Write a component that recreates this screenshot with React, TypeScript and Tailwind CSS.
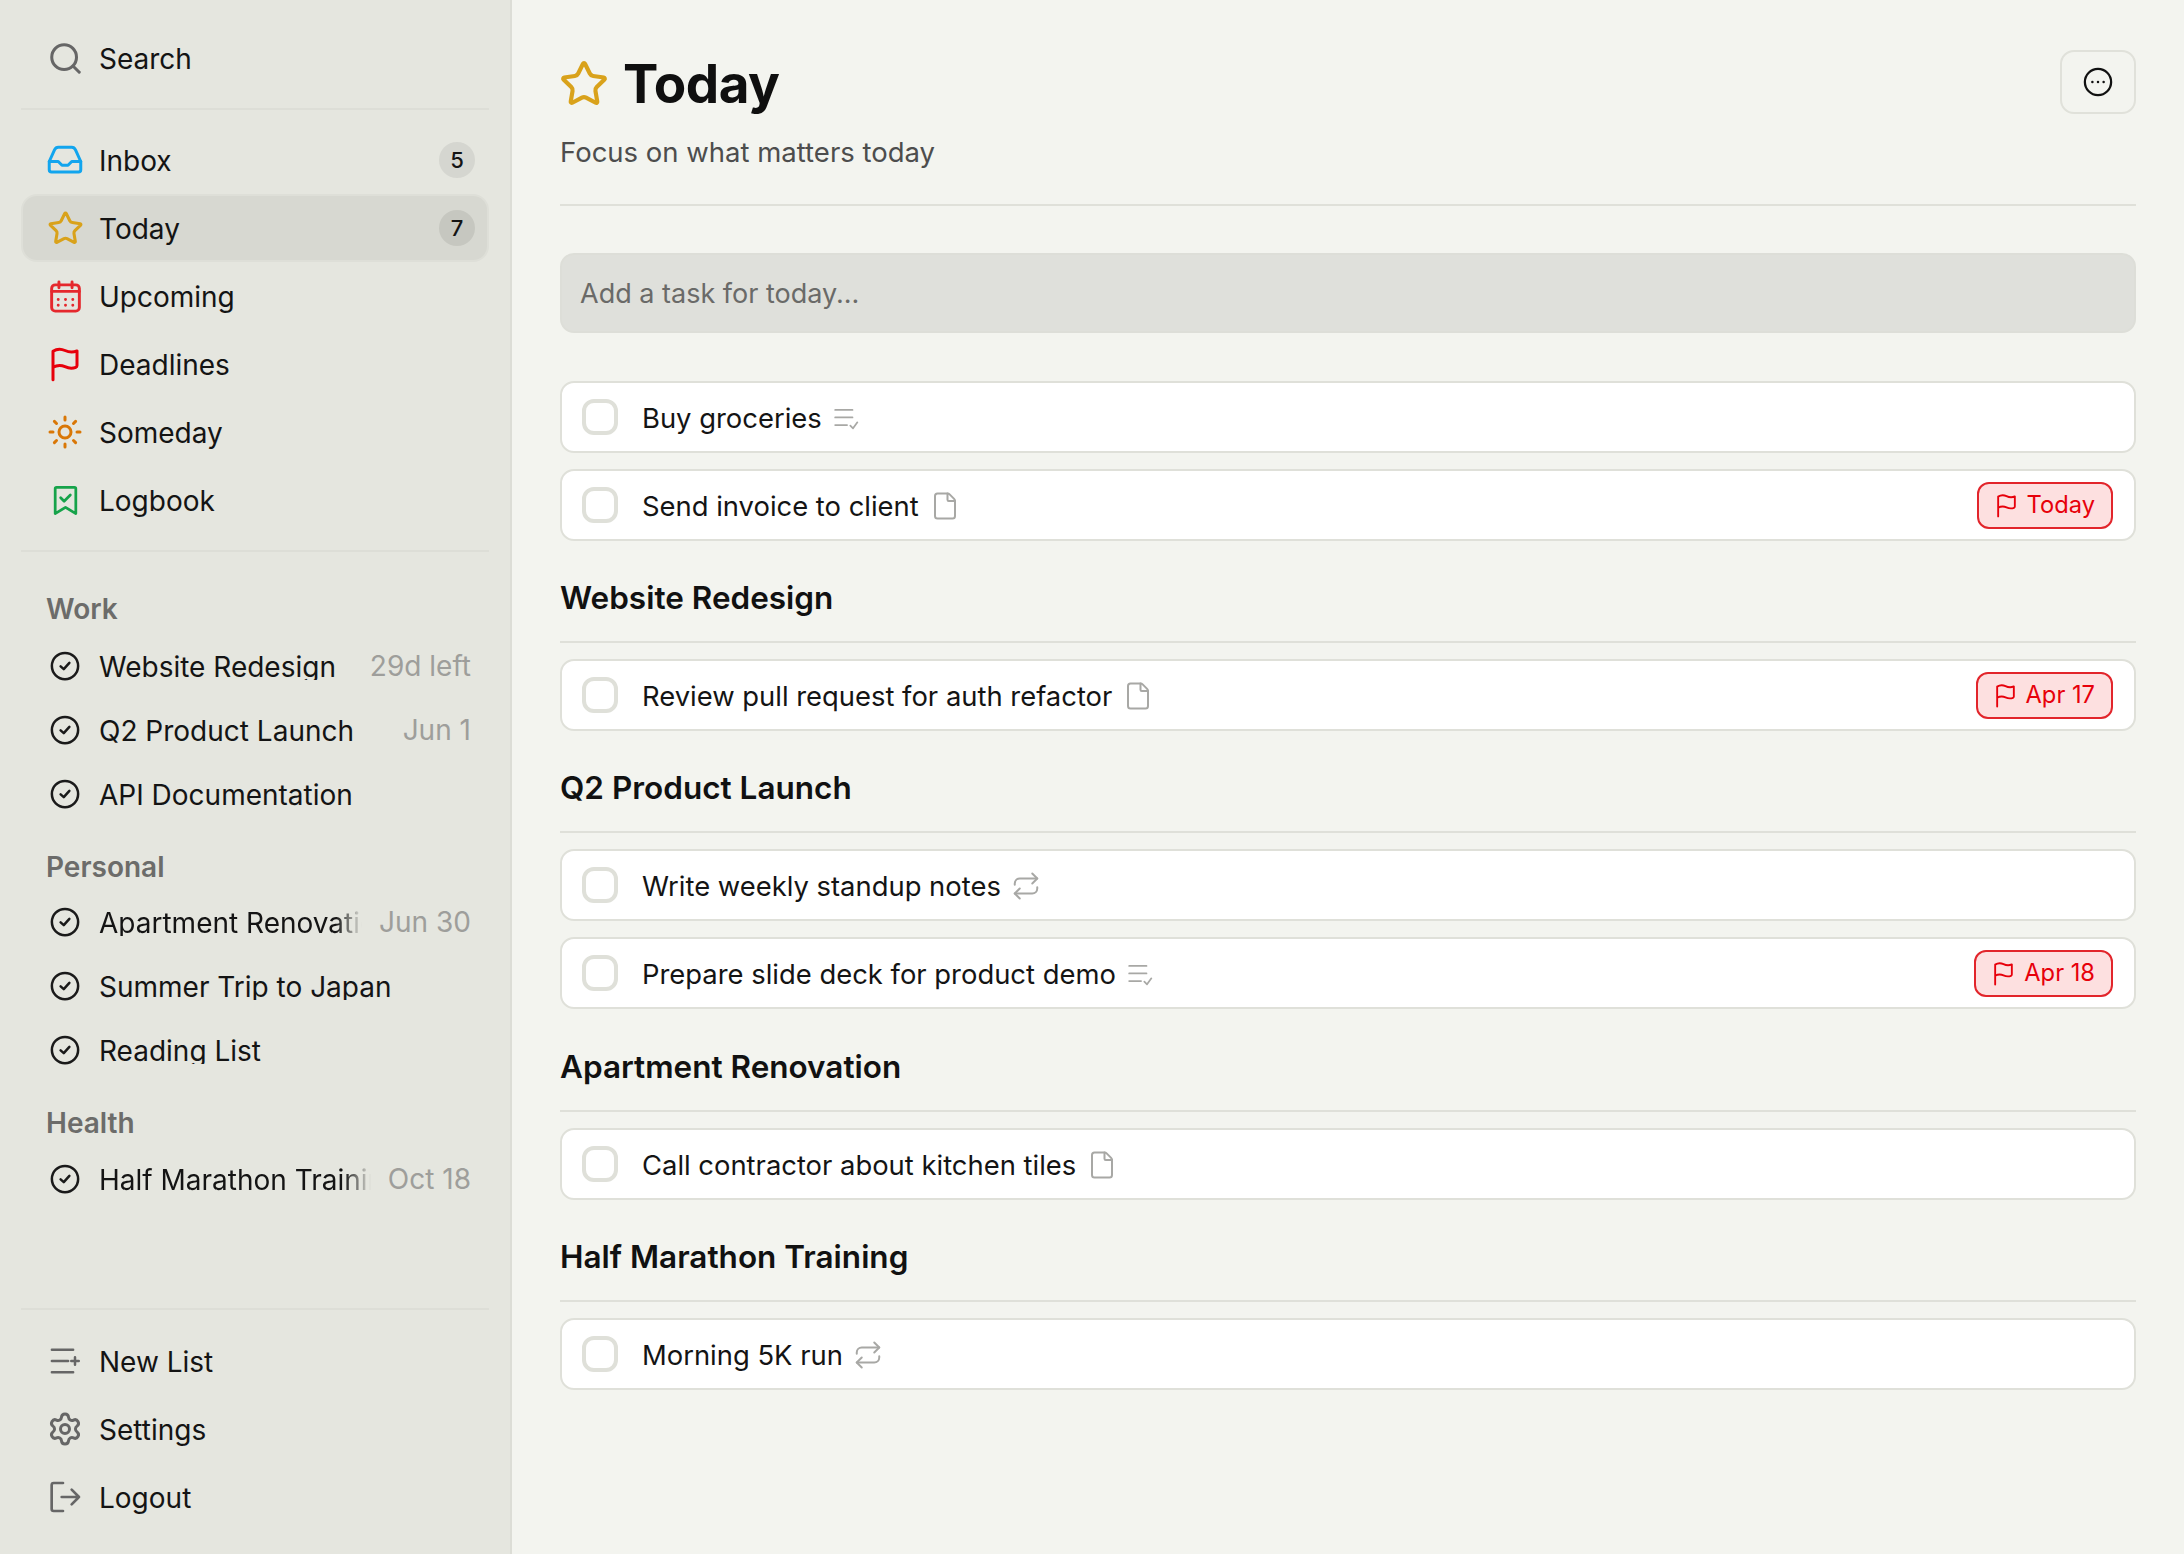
import { Star, Sun, Settings, File, Repeat } from "lucide-react";
import type { ReactNode } from "react";

type IconProps = { className?: string };

function Svg({ className, children, sw = 2 }: IconProps & { children: ReactNode; sw?: number }) {
  return (
    <svg viewBox="0 0 24 24" fill="none" stroke="currentColor" strokeWidth={sw} strokeLinecap="round" strokeLinejoin="round" className={className}>
      {children}
    </svg>
  );
}

const SearchIcon = ({ className }: IconProps) => (
  <Svg className={className} sw={2.200}>
    <circle cx="11" cy="11" r="9" />
    <path d="M18 18l4 4" />
  </Svg>
);

const InboxIcon = ({ className }: IconProps) => (
  <Svg className={className}>
    <path d="M1.500 13 5 5.200C5.500 4.200 6.200 3.500 7.500 3.500h9c1.300 0 2 .7 2.500 1.700L22.500 13v5.500a1.500 1.500 0 0 1-1.500 1.500H3a1.500 1.500 0 0 1-1.500-1.500z" />
    <path d="M1.500 13H7.500l2.500 2.500h4l2.500-2.500h6" />
  </Svg>
);

const CalendarIcon = ({ className }: IconProps) => (
  <Svg className={className}>
    <rect x="2.500" y="4" width="19" height="18" rx="2.500" />
    <path d="M2.500 8.500h19M7.500 2v4M16.500 2v4" />
    <path d="M7 14h.01M12 14h.01M17 14h.01M7 18h.01M12 18h.01M17 18h.01" strokeWidth="2" />
  </Svg>
);

const FlagIcon = ({ className, sw = 2 }: IconProps & { sw?: number }) => (
  <Svg className={className} sw={sw}>
    <path d="M4 22.500V3.500C7 1.500 9.500 1.800 12 3s5 1.600 8 .300V13c0 .6-.3 1-.8 1.200-2.400 1-4.800.7-7.200-.4s-5-1.300-8 .4" />
  </Svg>
);

const BookmarkCheck = ({ className }: IconProps) => (
  <Svg className={className}>
    <path d="M4.500 3.500c0-.6.400-1 1-1h13c.6 0 1 .4 1 1v18l-7.500-4.500L4.500 21.500z" />
    <path d="M8.500 10 11 12.500 15.500 8" />
  </Svg>
);

const CircleCheck = ({ className }: IconProps) => (
  <Svg className={className} sw={2}>
    <circle cx="12" cy="12" r="10.500" />
    <path d="M8.500 12.300 11 14.500l4.500-5" />
  </Svg>
);

const NewListIcon = ({ className }: IconProps) => (
  <Svg className={className}>
    <path d="M1.500 3h17M1.500 12h13M1.500 21h17" />
    <path d="M20 9v6M17 12h6" />
  </Svg>
);

const LogoutIcon = ({ className }: IconProps) => (
  <Svg className={className}>
    <path d="M10.500 1.500H3.500C2.600 1.500 2 2.100 2 3v18c0 .9.600 1.500 1.500 1.500h7" />
    <path d="M9.500 12H22.500M17 6.500l5.500 5.500-5.500 5.500" />
  </Svg>
);

const ListCheck = ({ className }: IconProps) => (
  <Svg className={className} sw={1.600}>
    <path d="M2 4.500h16M2 11.500h16M2 18.500h11" />
    <path d="M16 19l2.500 2.500L22.500 16" />
  </Svg>
);

const MoreIcon = ({ className }: IconProps) => (
  <Svg className={className} sw={1.800}>
    <circle cx="12" cy="12" r="10.500" />
    <path d="M7.500 12h.01M12 12h.01M16.500 12h.01" strokeWidth="2" />
  </Svg>
);

function NavRow({ icon, label, count, active }: { icon: ReactNode; label: string; count?: number; active?: boolean }) {
  return (
    <div className={`flex h-[68px] items-center gap-[17px] rounded-[16px] border-2 pl-[25px] pr-[12px] ${active ? "border-[#dedfd8] bg-[#d7d8d1]" : "border-transparent"}`}>
      <span className="flex w-[34px] justify-center">{icon}</span>
      <span className="flex-1 pt-[2px] text-[28px] text-[#141414]">{label}</span>
      {count !== undefined && (
        <span className={`flex h-[36px] w-[36px] items-center justify-center rounded-full text-[22px] font-medium text-[#141414] ${active ? "bg-[#c6c7c0]" : "bg-[#d5d6d0]"}`}>{count}</span>
      )}
    </div>
  );
}

function ProjectRow({ name, meta, fade }: { name: string; meta?: string; fade?: boolean }) {
  return (
    <div className="flex h-[64px] items-center gap-[17px] pl-[27px] pr-[18px]">
      <span className="flex w-[34px] flex-none justify-center">
        <CircleCheck className="h-[30px] w-[30px] text-[#1a1a1a]" />
      </span>
      <span className={`h-[27px] min-w-0 flex-1 overflow-hidden whitespace-nowrap text-[28px] leading-[28px] text-[#141414] ${fade ? "[mask-image:linear-gradient(to_right,black_90%,transparent)]" : ""}`}>{name}</span>
      {meta && <span className="flex-none whitespace-nowrap text-[28px] text-[#9e9e9b]">{meta}</span>}
    </div>
  );
}

function GroupLabel({ children, className }: { children: ReactNode; className?: string }) {
  return <div className={`pl-[25px] text-[28px] font-semibold leading-[28px] text-[#6c6c6a] ${className ?? ""}`}>{children}</div>;
}

function Task({ title, icon, due }: { title: string; icon?: "list" | "file" | "repeat"; due?: string }) {
  return (
    <div className="flex h-[72px] items-center rounded-[14px] border-2 border-[#dfe0d9] bg-white pl-[20px] pr-[21px]">
      <span className="h-[36px] w-[36px] flex-none rounded-[12px] border-[4px] border-[#dfe0d9]" />
      <span className="ml-[24px] pt-[3px] text-[27.400px] text-[#141414]">{title}</span>
      {icon === "list" && <ListCheck className="ml-[11px] mt-[2px] h-[26px] w-[26px] text-[#a8a8a5]" />}
      {icon === "file" && <File strokeWidth={1.600} className="ml-[11px] mt-[2px] h-[30px] w-[30px] text-[#a8a8a5]" />}
      {icon === "repeat" && <Repeat strokeWidth={1.600} className="ml-[10px] mt-[2px] h-[30px] w-[30px] text-[#a8a8a5]" />}
      {due && (
        <span className="ml-auto flex h-[47px] items-center gap-[8px] rounded-[12px] border-2 border-[#e2252b] bg-[#fde0e0] pl-[15px] pr-[16px] text-[23.700px] text-[#e7000b]">
          <FlagIcon className="h-[25px] w-[25px]" sw={1.800} />
          {due}
        </span>
      )}
    </div>
  );
}

function Section({ title, children, className }: { title: string; children: ReactNode; className?: string }) {
  return (
    <section className={className ?? "mt-[39px]"}>
      <h2 className="border-b-2 border-[#dfe0d9] pb-[25px] text-[31.500px] font-semibold leading-[36px] text-[#111]">{title}</h2>
      <div className="mt-[16px] flex flex-col gap-[16px]">{children}</div>
    </section>
  );
}

export default function App() {
  return (
    <div className="flex h-screen w-full overflow-hidden bg-[#f3f4ef] font-['Inter',sans-serif]">
      <aside className="flex w-[512px] flex-none flex-col border-r-2 border-[#dcddd6] bg-[#e5e6df] px-[21px]">
        <div className="border-b-2 border-[#dddED7] pb-[16px] pt-[24px]">
          <NavRow icon={<SearchIcon className="h-[33px] w-[33px] text-[#666]" />} label="Search" />
        </div>
        <nav className="border-b-2 border-[#dddED7] py-[16px]">
          <NavRow icon={<InboxIcon className="h-[36px] w-[36px] flex-none text-[#12a5ee]" />} label="Inbox" count={5} />
          <NavRow icon={<Star strokeWidth={2} className="h-[37px] w-[37px] flex-none text-[#d9a21b]" />} label="Today" count={7} active />
          <NavRow icon={<CalendarIcon className="h-[35px] w-[35px] flex-none text-[#e5282d]" />} label="Upcoming" />
          <NavRow icon={<FlagIcon className="h-[36px] w-[36px] flex-none text-[#e7000b]" />} label="Deadlines" />
          <NavRow icon={<Sun strokeWidth={2} className="h-[36px] w-[36px] flex-none text-[#d97706]" />} label="Someday" />
          <NavRow icon={<BookmarkCheck className="h-[33px] w-[33px] flex-none text-[#16a34a]" />} label="Logbook" />
        </nav>
        <GroupLabel className="mt-[43px] mb-[11px]">Work</GroupLabel>
        <ProjectRow name="Website Redesign" meta="29d left" />
        <ProjectRow name="Q2 Product Launch" meta="Jun 1" />
        <ProjectRow name="API Documentation" />
        <GroupLabel className="mt-[27px] mb-[9px]">Personal</GroupLabel>
        <ProjectRow name="Apartment Renovation" meta="Jun 30" fade />
        <ProjectRow name="Summer Trip to Japan" />
        <ProjectRow name="Reading List" />
        <GroupLabel className="mt-[27px] mb-[10px]">Health</GroupLabel>
        <ProjectRow name="Half Marathon Training" meta="Oct 18" fade />
        <div className="mt-auto border-t-2 border-[#dddED7] pb-[23px] pt-[17px]">
          <NavRow icon={<NewListIcon className="h-[30px] w-[30px] text-[#666]" />} label="New List" />
          <NavRow icon={<Settings strokeWidth={2} className="h-[36px] w-[36px] flex-none text-[#666]" />} label="Settings" />
          <NavRow icon={<LogoutIcon className="h-[32px] w-[32px] text-[#666]" />} label="Logout" />
        </div>
      </aside>
      <main className="min-w-0 flex-1 px-[48px] pt-[50px]">
        <header className="flex items-start justify-between border-b-2 border-[#dfe0d9] pb-[32px]">
          <div>
            <div className="flex items-center gap-[14px]">
              <Star strokeWidth={2} className="-ml-[1px] h-[50px] w-[50px] text-[#d9a21b]" />
              <h1 className="text-[53px] font-bold leading-[68px] tracking-[-0.5px] text-[#0f0f0f]">Today</h1>
            </div>
            <p className="mt-[14px] text-[27.500px] leading-[40px] text-[#4d4d4d]">Focus on what matters today</p>
          </div>
          <button className="flex h-[64px] w-[76px] items-center justify-center rounded-[14px] border-2 border-[#e0e1da]">
            <MoreIcon className="h-[30px] w-[30px] text-[#111]" />
          </button>
        </header>
        <div className="mt-[47px] flex h-[80px] items-center rounded-[14px] border-2 border-[#dddED8] bg-[#dfe0db] px-[18px] pt-[3px] text-[27px] text-[#6a6a68]">Add a task for today...</div>
        <div className="mt-[48px] flex flex-col gap-[16px]">
          <Task title="Buy groceries" icon="list" />
          <Task title="Send invoice to client" icon="file" due="Today" />
        </div>
        <Section title="Website Redesign">
          <Task title="Review pull request for auth refactor" icon="file" due="Apr 17" />
        </Section>
        <Section title="Q2 Product Launch">
          <Task title="Write weekly standup notes" icon="repeat" />
          <Task title="Prepare slide deck for product demo" icon="list" due="Apr 18" />
        </Section>
        <Section title="Apartment Renovation" className="mt-[40px]">
          <Task title="Call contractor about kitchen tiles" icon="file" />
        </Section>
        <Section title="Half Marathon Training">
          <Task title="Morning 5K run" icon="repeat" />
        </Section>
      </main>
    </div>
  );
}
